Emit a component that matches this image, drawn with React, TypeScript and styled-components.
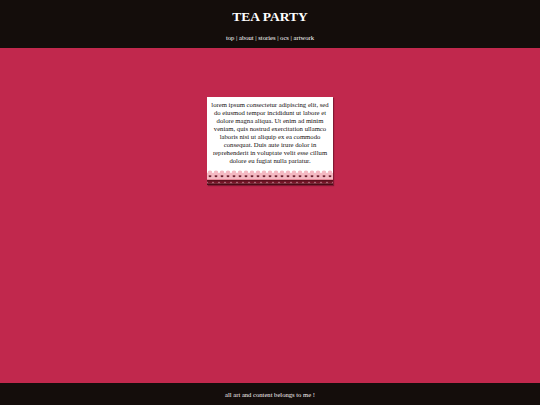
import React from "react";
import styled, { createGlobalStyle } from "styled-components";

const GlobalStyle = createGlobalStyle`
  html, body {
    margin: 0;
    padding: 0;
    height: 100%;
  }
  body {
    font-family: "Liberation Serif", "Times New Roman", serif;
    background: #c1284d;
  }
  #root {
    height: 100%;
  }
`;

const Page = styled.div`
  display: flex;
  flex-direction: column;
  min-height: 405px;
  height: 100%;
`;

const Header = styled.header`
  background: #140d0b;
  height: 48px;
  display: flex;
  flex-direction: column;
  align-items: center;
  color: #ffffff;
`;

const Title = styled.h1`
  margin: 9px 0 0;
  font-size: 13.5px;
  line-height: 16px;
  font-weight: bold;
`;

const Nav = styled.nav`
  margin-top: 9px;
  font-size: 6.6px;
  line-height: 8px;
  color: #ffffff;
`;

const Main = styled.main`
  flex: 1;
  background: #c1284d;
  display: flex;
  justify-content: center;
  align-items: flex-start;
  padding-top: 49px;
`;

const Card = styled.div`
  width: 126px;
  background: #ffffff;
  box-shadow: 1px 1px 1px rgba(70, 10, 25, 0.5);
`;

const CardText = styled.p`
  margin: 0;
  padding: 4px 3px 5px;
  font-size: 6.7px;
  line-height: 8px;
  text-align: center;
  color: #151010;
`;

const Footer = styled.footer`
  background: #140d0b;
  height: 22px;
  display: flex;
  align-items: center;
  justify-content: center;
  font-size: 6.6px;
  color: #f4f0f0;
`;

const links = ["top", "about", "stories", "ocs", "artwork"];

// lace trim along the bottom of the card
const Lace: React.FC = () => (
  <svg width="126" height="15" viewBox="0 0 126 15" style={{ display: "block" }}>
    <defs>
      <pattern id="lace" width="6" height="15" patternUnits="userSpaceOnUse">
        <rect x="0" y="0" width="6" height="15" fill="#ffffff" />
        <circle cx="3" cy="3" r="2.4" fill="#f4b9c3" />
        <rect x="0" y="3" width="6" height="8" fill="#f4b9c3" />
        <path d="M1.9 6 L3 7.6 L4.1 6 Z" fill="#5e1020" />
        <circle cx="2.3" cy="6" r="0.75" fill="#5e1020" />
        <circle cx="3.7" cy="6" r="0.75" fill="#5e1020" />
        <rect x="0" y="9" width="6" height="1.2" fill="#e48c9c" />
        <path d="M0 10.5 A3 3 0 0 0 6 10.5 Z" fill="#5a0f1c" />
        <rect x="0" y="10" width="6" height="1.6" fill="#5a0f1c" />
        <rect x="0" y="13.2" width="6" height="1.8" fill="#4a0c16" />
        <rect x="0" y="11.5" width="6" height="2" fill="#9a2038" opacity="0.5" />
      </pattern>
    </defs>
    <rect width="126" height="15" fill="url(#lace)" />
  </svg>
);

const App: React.FC = (): JSX.Element => {
  return (
    <Page>
      <GlobalStyle />
      <Header>
        <Title>TEA PARTY</Title>
        <Nav>{links.join(" | ")}</Nav>
      </Header>
      <Main>
        <Card>
          <CardText>
            lorem ipsum consectetur adipiscing elit, sed do eiusmod tempor
            incididunt ut labore et dolore magna aliqua. Ut enim ad minim
            veniam, quis nostrud exercitation ullamco laboris nisi ut aliquip
            ex ea commodo consequat. Duis aute irure dolor in reprehenderit in
            voluptate velit esse cillum dolore eu fugiat nulla pariatur.
          </CardText>
          <Lace />
        </Card>
      </Main>
      <Footer>all art and content belongs to me !</Footer>
    </Page>
  );
};

export default App;
